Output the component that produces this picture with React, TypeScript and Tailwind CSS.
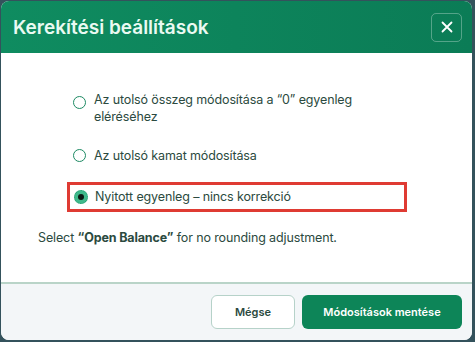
import React from "react";

function Radio({ checked }: { checked?: boolean }) {
  if (checked) {
    return (
      <span className="relative flex h-[14px] w-[14px] shrink-0 items-center justify-center rounded-full border border-dotted border-[#1f9a6e] bg-[#3fb98b]">
        <span className="h-[6px] w-[6px] rounded-full bg-[#0b1a14]" />
      </span>
    );
  }
  return <span className="block h-[13px] w-[13px] shrink-0 rounded-full border-[1.5px] border-[#1d8a63] bg-white" />;
}

export default function App() {
  return (
    <div
      className="h-[342px] w-[475px] bg-[#34525c] pl-[1px] pr-[3px] pt-[1px] pb-[2px]"
      style={{ fontFamily: "Inter, 'Noto Sans', sans-serif" }}
    >
      <div className="flex h-full flex-col overflow-hidden rounded-[8px] bg-white">
        <div className="flex h-[52px] shrink-0 items-center justify-between bg-gradient-to-r from-[#0f8c60] to-[#0b7c56] pl-[12px] pr-[10px]">
          <h1 className="text-[19px] font-semibold leading-none text-[#eafaf2]">Kerekítési beállítások</h1>
          <button className="flex h-[29px] w-[31px] items-center justify-center rounded-[5px] border border-white/30 text-white">
            <svg width="12" height="12" viewBox="0 0 12 12" fill="none" stroke="currentColor" strokeWidth="1.8" strokeLinecap="round">
              <path d="M1.5 1.5L10.5 10.5M10.5 1.5L1.5 10.5" />
            </svg>
          </button>
        </div>
        <div className="flex flex-1 flex-col pt-[38px] text-[12.5px] tracking-[-0.01em] text-[#2b4a40]">
          <div className="flex flex-col pl-[72px] pr-[64px]">
            <label className="flex items-start gap-[8px] leading-[17px]">
              <span className="block shrink-0 pt-[5px]">
                <Radio />
              </span>
              <span>Az utolsó összeg módosítása a “0” egyenleg eléréséhez</span>
            </label>
            <label className="mt-[22px] flex items-center gap-[8px] leading-[17px]">
              <Radio />
              <span>Az utolsó kamat módosítása</span>
            </label>
          </div>
          <div className="ml-[66px] mr-[65px] mt-[18px] flex h-[30px] items-center gap-[7px] border-[3px] border-[#df3b33] pl-[4px]">
            <Radio checked />
            <span>Nyitott egyenleg – nincs korrekció</span>
          </div>
          <p className="ml-[37px] mt-[17px]">
            Select <span className="font-bold">“Open Balance”</span> for no rounding adjustment.
          </p>
        </div>
        <div className="flex h-[58px] shrink-0 items-center justify-end gap-[7px] border-t-2 border-[#b9d4c8] bg-[#f3f6f8] pr-[10px]">
          <button className="h-[34px] w-[84px] rounded-[6px] border border-[#b6d2c9] bg-white text-[11px] font-semibold text-[#2b4a40]">
            Mégse
          </button>
          <button className="h-[34px] w-[160px] rounded-[6px] bg-[#0d8558] text-[11px] font-semibold text-white">
            Módosítások mentése
          </button>
        </div>
      </div>
    </div>
  );
}
